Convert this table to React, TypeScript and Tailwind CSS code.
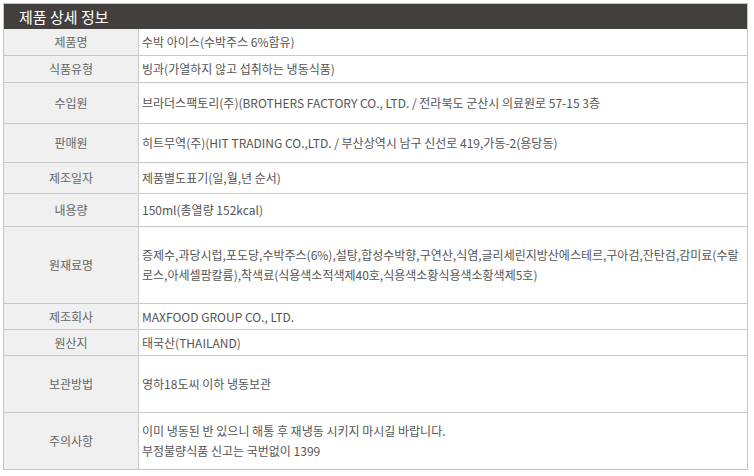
const rows: { label: string; value: string[]; h: string }[] = [
  { label: "제품명", value: ["수박 아이스(수박주스 6%함유)"], h: "h-[27px]" },
  { label: "식품유형", value: ["빙과(가열하지 않고 섭취하는 냉동식품)"], h: "h-[27px]" },
  {
    label: "수입원",
    value: ["브라더스팩토리(주)(BROTHERS FACTORY CO., LTD. / 전라북도 군산시 의료원로 57-15 3층"],
    h: "h-[41px]",
  },
  {
    label: "판매원",
    value: ["히트무역(주)(HIT TRADING CO.,LTD. / 부산상역시 남구 신선로 419,가동-2(용당동)"],
    h: "h-[39px]",
  },
  { label: "제조일자", value: ["제품별도표기(일,월,년 순서)"], h: "h-[31px]" },
  { label: "내용량", value: ["150ml(총열량 152kcal)"], h: "h-[33px]" },
  {
    label: "원재료명",
    value: [
      "증제수,과당시럽,포도당,수박주스(6%),설탕,합성수박향,구연산,식염,글리세린지방산에스테르,구아검,잔탄검,감미료(수랄",
      "로스,아세셀팜칼륨),착색료(식용색소적색제40호,식용색소황식용색소황색제5호)",
    ],
    h: "h-[77px]",
  },
  { label: "제조회사", value: ["MAXFOOD GROUP CO., LTD."], h: "h-[26px]" },
  { label: "원산지", value: ["태국산(THAILAND)"], h: "h-[26px]" },
  { label: "보관방법", value: ["영하18도씨 이하 냉동보관"], h: "h-[57px]" },
  {
    label: "주의사항",
    value: ["이미 냉동된 반 있으니 해통 후 재냉동 시키지 마시길 바랍니다.", "부정불량식품 신고는 국번없이 1399"],
    h: "h-[56px]",
  },
];

export default function App() {
  return (
    <div
      className="w-[754px] h-[476px] bg-white pl-[3px] pt-[3px]"
      style={{ fontFamily: '"Noto Sans CJK KR", "Noto Sans", sans-serif' }}
    >
      <div className="w-[745px] border border-[#c4c4c4]">
        {/* header */}
        <div className="h-[25px] bg-[#433f3c] flex items-center pl-[15px] text-[15px] text-white leading-none">
          제품 상세 정보
        </div>

        {rows.map((row, i) => (
          <div
            key={i}
            className={`flex ${row.h} ${i < rows.length - 1 ? "border-b border-[#c8c8c8]" : ""}`}
          >
            <div className="w-[135px] shrink-0 bg-[#f0f0f0] border-r border-[#c8c8c8] flex items-center justify-center text-[12px] text-[#666]">
              {row.label}
            </div>
            <div className="flex-1 flex flex-col justify-center pl-[3px] text-[12px] leading-[20px] text-[#555] whitespace-nowrap">
              {row.value.map((v, j) => (
                <div key={j}>{v}</div>
              ))}
            </div>
          </div>
        ))}
      </div>
    </div>
  );
}
